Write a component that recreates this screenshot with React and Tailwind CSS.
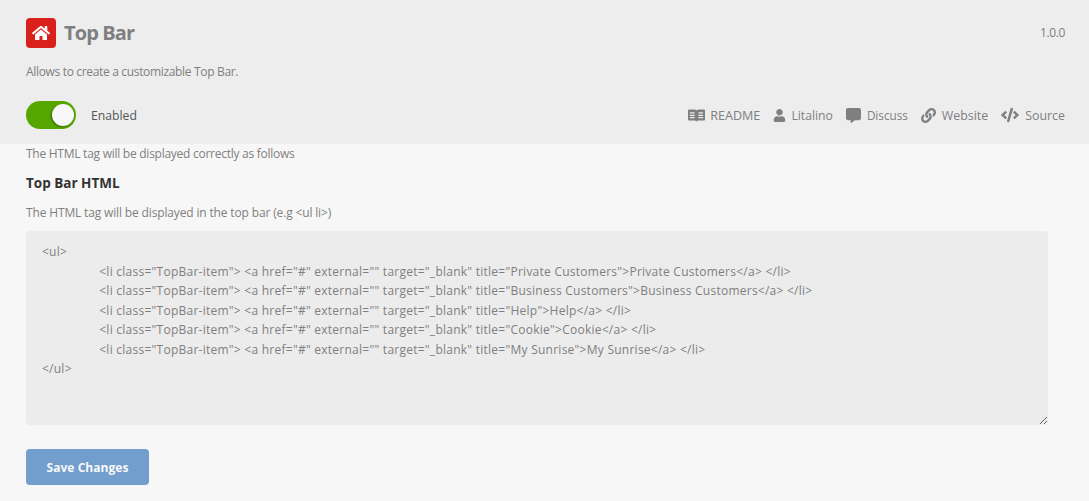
import { FaHome, FaUser, FaCommentAlt, FaLink, FaCode } from 'react-icons/fa';

function BookIcon({ className }) {
  return (
    <svg viewBox="0 0 18 13" fill="currentColor" className={className}>
      <path
        fillRule="evenodd"
        d="M0 1.2C0 .6.5.1 1.1.1h5.4c1 0 1.9.4 2.5 1 .6-.6 1.5-1 2.5-1h5.4c.6 0 1.1.5 1.1 1.1v9.6c0 .6-.5 1.1-1.1 1.1h-5.9c-.7 0-1.3.3-2 .9-.7-.6-1.300-.9-2-.9H1.100C.5 11.900 0 11.400 0 10.800V1.200zM2 3v1.300h5V3H2zm0 2.600v1.300h5V5.600H2zm0 2.600v1.300h5V8.200H2zM11 3v1.300h5V3h-5zm0 2.600v1.300h5V5.600h-5zm0 2.600v1.300h5V8.200h-5z"
      />
    </svg>
  );
}

const LINKS = [
  { label: 'README', icon: BookIcon, size: 'w-[17px] h-[13px]', gap: 'gap-[5px]', text: 'text-[12.6px]' },
  { label: 'Litalino', icon: FaUser, size: 'text-[13px]', gap: 'gap-[5px]', text: 'text-[12.2px]' },
  { label: 'Discuss', icon: FaCommentAlt, size: 'text-[15px]', gap: 'gap-[6px]', text: 'text-[11.7px]' },
  { label: 'Website', icon: FaLink, size: 'text-[15px]', gap: 'gap-[6px]', text: 'text-[12.4px]' },
  { label: 'Source', icon: FaCode, size: 'text-[18px]', gap: 'gap-[6px]', text: 'text-[12.4px]' },
];

const ITEMS = ['Private Customers', 'Business Customers', 'Help', 'Cookie', 'My Sunrise'];

const INDENT = ' '.repeat(17);

const HTML_VALUE = [
  '<ul>',
  ...ITEMS.map(
    (title) =>
      `${INDENT}<li class="TopBar-item"> <a href="#" external="" target="_blank" title="${title}">${title}</a> </li>`
  ),
  '</ul>',
].join('\n');

export default function App() {
  return (
    <div className="min-h-[501px] bg-[#f7f7f7] font-['Open_Sans',sans-serif] text-[13px] leading-[19.5px] text-[#7a7a7a] overflow-hidden">
      <header className="h-[144px] bg-[#ededed] pl-[26px] pr-[24px] pt-[18px]">
        <div className="flex items-center justify-between h-[30px]">
          <div className="flex items-center gap-[8px]">
            <span className="w-[30px] h-[30px] rounded-[4px] bg-[#d9201a] text-white flex items-center justify-center text-[18px]">
              <FaHome />
            </span>
            <h2 className="text-[20px] tracking-[-0.9px] font-bold text-[#7f7f7f]">Top Bar</h2>
          </div>
          <span className="text-[12px] tracking-[-0.4px] text-[#7f7f7f]">1.0.0</span>
        </div>

        <p className="mt-[15px] text-[12px] leading-[18px] tracking-[-0.33px] text-[#7f7f7f]">
          Allows to create a customizable Top Bar.
        </p>

        <div className="mt-[20px] flex items-center justify-between h-[28px]">
          <div className="flex items-center gap-[15px]">
            <span className="relative block w-[50px] h-[28px] rounded-full bg-[#56a600]">
              <span className="absolute right-[2px] top-[3px] w-[22px] h-[22px] rounded-full bg-[#f8f8f8] shadow-[-1px_1px_2px_rgba(0,0,0,0.35)]" />
            </span>
            <span className="mt-[1px] text-[#555555] text-[12.2px]">Enabled</span>
          </div>
          <nav className="flex items-center gap-[13px]">
            {LINKS.map(({ label, icon: Icon, size, gap, text }) => (
              <a key={label} className={`flex items-center ${gap} text-[#7f7f7f]`}>
                <Icon className={size} />
                <span className={`mt-[1px] ${text}`}>{label}</span>
              </a>
            ))}
          </nav>
        </div>
      </header>

      <main className="pl-[26px] pr-[41px]">
        <p className="text-[12px] leading-[18px] tracking-[-0.26px] text-[#7f7f7f] mt-[1px]">
          The HTML tag will be displayed correctly as follows
        </p>
        <h3 className="mt-[11px] text-[13.5px] font-bold text-[#333333]">Top Bar HTML</h3>
        <p className="mt-[10px] text-[12px] leading-[18px] tracking-[-0.15px] text-[#7f7f7f]">
          The HTML tag will be displayed in the top bar (e.g &lt;ul li&gt;)
        </p>
        <textarea
          className="block mt-[9px] w-full h-[194px] rounded-[4px] bg-[#ececec] px-[16px] pt-[11.7px] pb-[8px] text-[12px] tracking-[0.25px] leading-[19.5px] text-[#7f7f7f] outline-none"
          defaultValue={HTML_VALUE}
        />
        <button className="mt-[24px] block w-[123px] h-[36px] pt-[2px] rounded-[4px] bg-[#719ecd] text-[12px] tracking-[0.05px] font-bold text-[#f8f8f8]">
          Save Changes
        </button>
      </main>
    </div>
  );
}
